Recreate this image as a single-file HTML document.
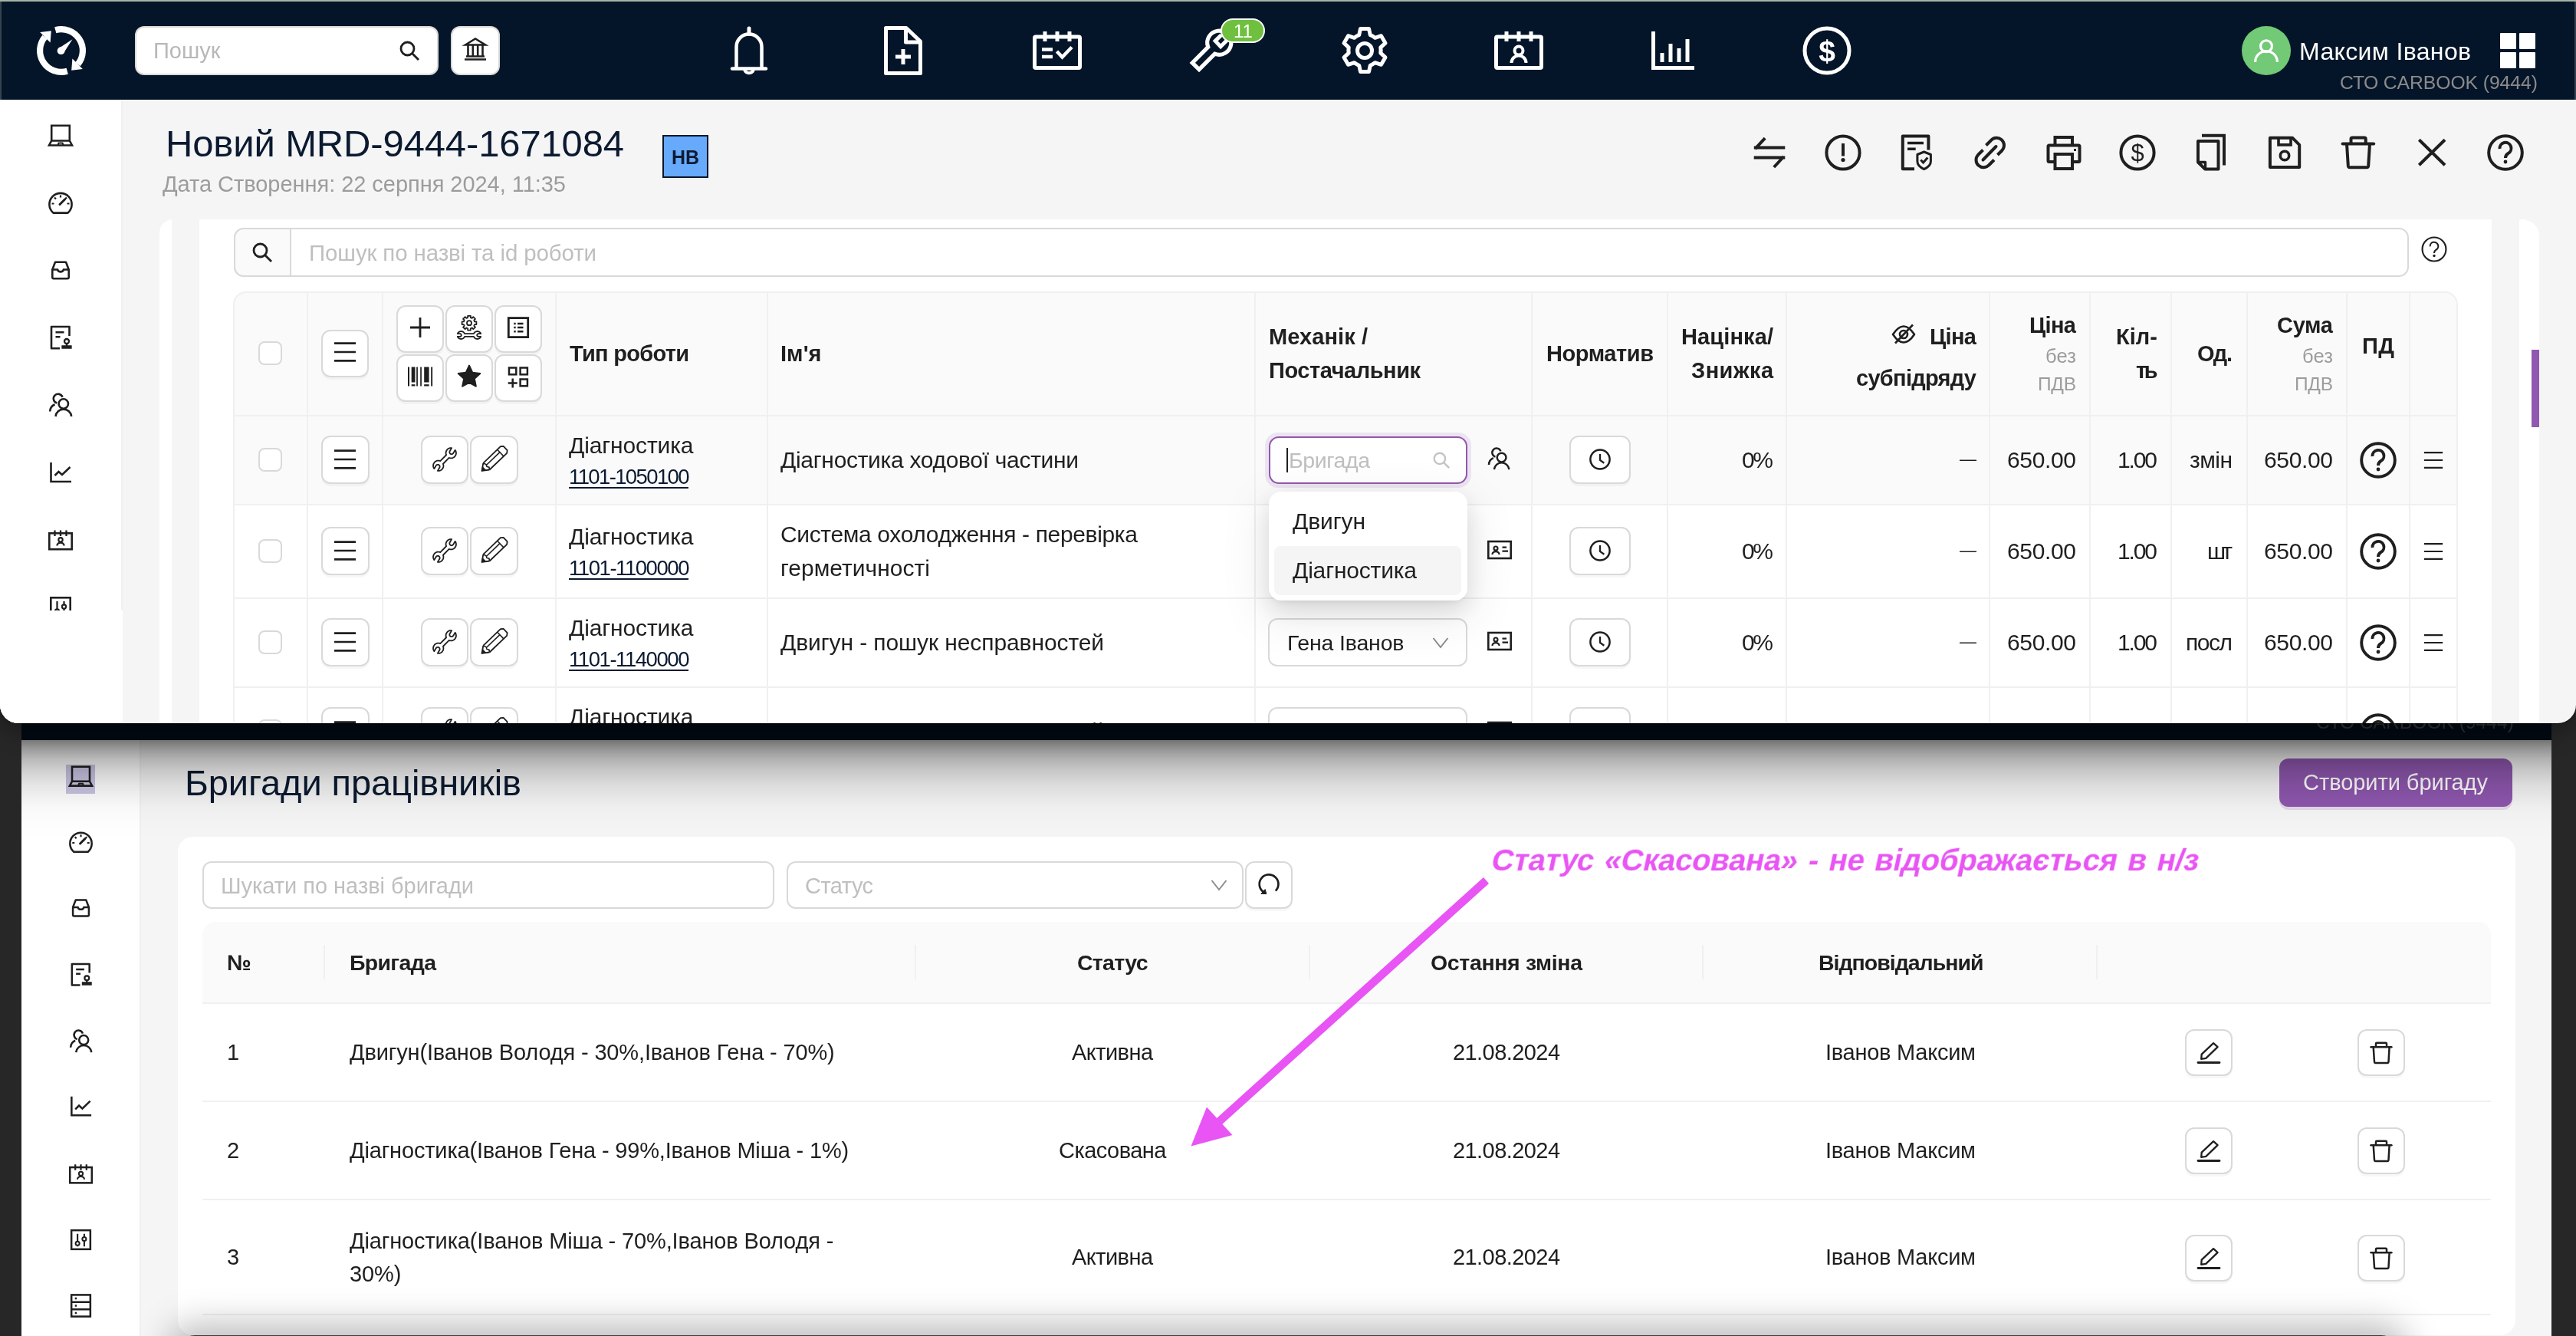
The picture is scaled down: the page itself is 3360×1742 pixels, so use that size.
<!DOCTYPE html>
<html lang="uk"><head><meta charset="utf-8"><title>CARBOOK</title>
<style>
*{box-sizing:border-box}
html,body{margin:0;padding:0}
body{width:3360px;height:1742px;overflow:hidden;background:#272727;position:relative;
 font-family:"Liberation Sans",sans-serif;color:#1f1f1f;-webkit-font-smoothing:antialiased}
.t{position:absolute;white-space:nowrap;display:block;will-change:transform}
.ic{position:absolute;will-change:transform;fill:none;stroke:currentColor;stroke-width:2;overflow:visible}
.abs{position:absolute}
#w1{position:absolute;left:0;top:0;width:3360px;height:943px;background:#f5f5f5;overflow:hidden;
 border-radius:0 0 24px 24px}
#w1sh{position:absolute;left:0;top:0;width:3360px;height:943px;border-radius:0 0 24px 24px;
 box-shadow:0 0 0 1px rgba(0,0,0,.4),0 10px 30px rgba(0,0,0,.35)}
#w2{position:absolute;left:28px;top:900px;width:3300px;height:860px;background:#f5f5f5;overflow:hidden}
.btn{position:absolute;background:#fff;border:2px solid #d9d9d9;border-radius:12px;box-shadow:0 3px 0 rgba(0,0,0,.03)}
.cb{position:absolute;width:31px;height:31px;background:#fff;border:2px solid #d9d9d9;border-radius:8px}
.vl{position:absolute;width:2px;background:#f0f0f0}
.hl{position:absolute;height:2px;background:#f0f0f0}
u{text-decoration:underline;text-decoration-thickness:2px;text-underline-offset:4px}
</style></head><body>
<div id="w2">
<div style="position:absolute;left:0px;top:0px;width:3300px;height:65px;background:#051529;"></div>
<span class="t" style="left:2993.0px;top:24.0px;font-size:24.7px;line-height:35px;color:#6e6e6e;letter-spacing:-0.05px;">СТО CARBOOK (9444)</span>
<div style="position:absolute;left:0px;top:65px;width:155px;height:795px;background:#fff;"></div>
<div style="position:absolute;left:154px;top:65px;width:2px;height:795px;background:#f0f0f0;"></div>
<div style="position:absolute;left:57.5px;top:97px;width:38.5px;height:38px;background:#c9c6e4;"></div>
<svg class="ic" viewBox="0 0 36 36" style="left:60.2px;top:94px;width:35px;height:35px;color:#1f1f1f;"><path d="M6.2 25.5 V5.8 H29.8 V25.5" stroke-width="2.6"/><path d="M6.2 25.5 H29.8 L33 31.5 H3 Z" stroke-width="2.6" stroke-linejoin="miter"/><path d="M14.5 31 L15.5 28.6 H20.5 L21.5 31" stroke-width="2"/></svg>
<svg class="ic" viewBox="0 0 36 36" style="left:60.2px;top:179.5px;width:35px;height:35px;color:#1f1f1f;"><path d="M8.5 31.6 A14.6 14.6 0 1 1 27.5 31.6 Z" stroke-width="2.6" stroke-linejoin="round"/><path d="M18 8.5 V11.5 M10 11.5 L12 13.6 M26 11.5 L24 13.6 M6.5 19.5 H9.5 M26.5 19.5 H29.5" stroke-width="2.2"/><path d="M17 20.5 L23.5 14" stroke-width="3" stroke-linecap="round"/></svg>
<svg class="ic" viewBox="0 0 36 36" style="left:60.2px;top:265.5px;width:35px;height:35px;color:#1f1f1f;"><path d="M7.3 17.5 L11 7.8 H25 L28.7 17.5 V27.5 Q28.7 29.2 27 29.2 H9 Q7.3 29.2 7.3 27.5 Z" stroke-width="2.6" stroke-linejoin="round"/><path d="M7.3 17.5 H14 A4.2 4.2 0 0 0 22 17.5 H28.7" stroke-width="2.6"/></svg>
<svg class="ic" viewBox="0 0 36 36" style="left:60.2px;top:352.5px;width:35px;height:35px;color:#1f1f1f;"><path d="M17 32.3 H6 V4 H29.5 V16" stroke-width="2.6" stroke-linejoin="round"/><path d="M11.5 11.3 H22.5 M11.5 17.2 H17.5" stroke-width="2.6"/><circle cx="26" cy="23" r="3" stroke-width="2.3"/><path d="M26 26 V29.5 M20.5 31.5 H31.5 V29.3 H20.5 Z" stroke-width="2.3"/></svg>
<svg class="ic" viewBox="0 0 36 36" style="left:60.2px;top:439.5px;width:35px;height:35px;color:#1f1f1f;"><circle cx="21.8" cy="16.5" r="6.2" stroke-width="2.6"/><path d="M11.5 33 A10.4 10.4 0 0 1 32.2 33" stroke-width="2.6"/><path d="M13.2 15.5 A6 6 0 1 1 20.5 7.8" stroke-width="2.6"/><path d="M4.2 26.5 A10.5 10.5 0 0 1 10.5 17.2" stroke-width="2.6"/></svg>
<svg class="ic" viewBox="0 0 36 36" style="left:60.2px;top:525px;width:35px;height:35px;color:#1f1f1f;"><path d="M5.5 5 V30 H32" stroke-width="2.6"/><path d="M10.5 22 L15.5 17 L20 21 L30.5 11" stroke-width="2.6"/></svg>
<svg class="ic" viewBox="0 0 36 36" style="left:60.2px;top:612.5px;width:35px;height:35px;color:#1f1f1f;"><rect x="3.3" y="9.3" width="29.4" height="20.9" stroke-width="2.6"/><path d="M10.5 5.5 V13 M18 5.5 V13 M25.5 5.5 V13" stroke-width="2.3"/><circle cx="18" cy="17.8" r="2.7" stroke-width="2.1"/><path d="M13.2 25.5 A4.9 4.9 0 0 1 22.8 25.5" stroke-width="2.1"/></svg>
<svg class="ic" viewBox="0 0 36 36" style="left:60.2px;top:699px;width:35px;height:35px;color:#1f1f1f;"><rect x="5.3" y="5.3" width="25.4" height="25.4" stroke-width="2.6"/><path d="M13.5 10 V20 M13.5 26 V27 M22.5 10 V14 M22.5 20 V27" stroke-width="2.2"/><circle cx="13.5" cy="23" r="2.6" stroke-width="2.1"/><circle cx="22.5" cy="17" r="2.6" stroke-width="2.1"/></svg>
<svg class="ic" viewBox="0 0 36 36" style="left:60.2px;top:785px;width:35px;height:35px;color:#1f1f1f;"><rect x="5.3" y="3.5" width="25.4" height="29" stroke-width="2.6"/><path d="M5.3 13.2 H30.7 M5.3 22.8 H30.7" stroke-width="2.6"/><path d="M10 8.3 H12.5 M10 18 H12.5 M10 27.7 H12.5" stroke-width="2.6"/></svg>
<span class="t" style="left:213.0px;top:88.0px;font-size:47px;line-height:66px;color:#0b1a30;letter-spacing:-0.08px;">Бригади працівників</span>
<div style="position:absolute;left:2945px;top:89px;width:304px;height:63px;background:#8e57ae;border-radius:12px;box-shadow:0 4px 0 rgba(142,87,174,.18);"></div>
<span class="t" style="left:2976.0px;top:99.5px;font-size:29px;line-height:41px;color:#fff;letter-spacing:-0.05px;">Створити бригаду</span>
<div style="position:absolute;left:204px;top:191px;width:3049px;height:650px;background:#fff;border-radius:20px;"></div>
<div style="position:absolute;left:236px;top:223px;width:746px;height:62px;background:#fff;border:2px solid #d9d9d9;border-radius:12px;"></div>
<span class="t" style="left:260.0px;top:234.5px;font-size:29px;line-height:41px;color:#bfbfbf;letter-spacing:-0.02px;">Шукати по назві бригади</span>
<div style="position:absolute;left:998px;top:223px;width:596px;height:62px;background:#fff;border:2px solid #d9d9d9;border-radius:12px;"></div>
<span class="t" style="left:1022.0px;top:234.5px;font-size:29px;line-height:41px;color:#bfbfbf;letter-spacing:-0.53px;">Статус</span>
<svg class="ic" viewBox="0 0 22 22" style="left:1550.5px;top:243px;width:22px;height:22px;color:#8c8c8c;"><path d="M1.5 5 L11 17 L20.5 5" stroke-width="2"/></svg>
<div class="btn" style="position:absolute;left:1596px;top:223px;width:62px;height:62px;"></div>
<svg class="ic" viewBox="0 0 30 30" style="left:1611.5px;top:238px;width:30px;height:30px;color:#1f1f1f;"><path d="M23.8 23.6 A12.4 12.4 0 1 0 7.5 24.6" stroke-width="2.7"/><path d="M4.8 27.3 L10.2 21.6 L11.8 27.6 Z" fill="currentColor" stroke="currentColor" stroke-width="1" stroke-linejoin="round"/></svg>
<div style="position:absolute;left:236px;top:302px;width:2985px;height:106px;background:#fafafa;border-radius:16px 16px 0 0;"></div>
<div style="position:absolute;left:236px;top:407px;width:2985px;height:2px;background:#f0f0f0;"></div>
<div style="position:absolute;left:236px;top:535px;width:2985px;height:2px;background:#f0f0f0;"></div>
<div style="position:absolute;left:236px;top:663px;width:2985px;height:2px;background:#f0f0f0;"></div>
<div style="position:absolute;left:236px;top:813px;width:2985px;height:2px;background:#f0f0f0;"></div>
<div style="position:absolute;left:394px;top:332px;width:2px;height:45px;background:#f0f0f0;"></div>
<div style="position:absolute;left:1165px;top:332px;width:2px;height:45px;background:#f0f0f0;"></div>
<div style="position:absolute;left:1679px;top:332px;width:2px;height:45px;background:#f0f0f0;"></div>
<div style="position:absolute;left:2192px;top:332px;width:2px;height:45px;background:#f0f0f0;"></div>
<div style="position:absolute;left:2706px;top:332px;width:2px;height:45px;background:#f0f0f0;"></div>
<span class="t" style="left:268.0px;top:335.0px;font-size:28.5px;line-height:40px;color:#1f1f1f;font-weight:700;">№</span>
<span class="t" style="left:427.5px;top:335.0px;font-size:28.5px;line-height:40px;color:#1f1f1f;font-weight:700;letter-spacing:-0.68px;">Бригада</span>
<span class="t" style="left:1377.0px;top:335.0px;font-size:28.5px;line-height:40px;color:#1f1f1f;font-weight:700;letter-spacing:-0.71px;">Статус</span>
<span class="t" style="left:1838.0px;top:335.0px;font-size:28.5px;line-height:40px;color:#1f1f1f;font-weight:700;letter-spacing:-0.36px;">Остання зміна</span>
<span class="t" style="left:2343.5px;top:335.0px;font-size:28.5px;line-height:40px;color:#1f1f1f;font-weight:700;letter-spacing:-1.00px;">Відповідальний</span>
<span class="t" style="left:268.0px;top:451.5px;font-size:29px;line-height:41px;color:#1f1f1f;">1</span>
<span class="t" style="left:427.5px;top:451.5px;font-size:29px;line-height:41px;color:#1f1f1f;letter-spacing:-0.15px;">Двигун(Іванов Володя - 30%,Іванов Гена - 70%)</span>
<span class="t" style="left:1370.0px;top:451.5px;font-size:29px;line-height:41px;color:#1f1f1f;letter-spacing:-0.56px;">Активна</span>
<span class="t" style="left:1867.0px;top:451.5px;font-size:29px;line-height:41px;color:#1f1f1f;letter-spacing:-0.57px;">21.08.2024</span>
<span class="t" style="left:2353.0px;top:451.5px;font-size:29px;line-height:41px;color:#1f1f1f;letter-spacing:-0.26px;">Іванов Максим</span>
<div class="btn" style="position:absolute;left:2822px;top:442px;width:62px;height:61px;"></div>
<svg class="ic" viewBox="0 0 30 30" style="left:2837.5px;top:456px;width:30px;height:30px;color:#1f1f1f;"><path d="M1 29.5 H29" stroke-width="2.8" stroke-linecap="round"/><path d="M5.7 18.7 L21.1 4.2 L26.6 9.1 L11.3 23.8 L5.2 24.8 Z" stroke-width="2.3" stroke-linejoin="round"/></svg>
<div class="btn" style="position:absolute;left:3047px;top:442px;width:62px;height:61px;"></div>
<svg class="ic" viewBox="0 0 30 30" style="left:3062.5px;top:456px;width:30px;height:30px;color:#1f1f1f;"><path d="M1.5 9.2 H28.4" stroke-width="2.5" stroke-linecap="round"/><path d="M8 9.2 V5 Q8 3.8 9.2 3.8 H20.8 Q22 3.8 22 5 V9.2" stroke-width="2.5"/><path d="M4.7 9.2 L6 28.5 Q6.1 29.9 7.5 29.9 H23 Q24.4 29.9 24.5 28.5 L25.6 9.2" stroke-width="2.5"/></svg>
<span class="t" style="left:268.0px;top:579.5px;font-size:29px;line-height:41px;color:#1f1f1f;">2</span>
<span class="t" style="left:427.5px;top:579.5px;font-size:29px;line-height:41px;color:#1f1f1f;letter-spacing:-0.17px;">Діагностика(Іванов Гена - 99%,Іванов Міша - 1%)</span>
<span class="t" style="left:1353.0px;top:579.5px;font-size:29px;line-height:41px;color:#1f1f1f;letter-spacing:-0.53px;">Скасована</span>
<span class="t" style="left:1867.0px;top:579.5px;font-size:29px;line-height:41px;color:#1f1f1f;letter-spacing:-0.57px;">21.08.2024</span>
<span class="t" style="left:2353.0px;top:579.5px;font-size:29px;line-height:41px;color:#1f1f1f;letter-spacing:-0.26px;">Іванов Максим</span>
<div class="btn" style="position:absolute;left:2822px;top:570px;width:62px;height:61px;"></div>
<svg class="ic" viewBox="0 0 30 30" style="left:2837.5px;top:584px;width:30px;height:30px;color:#1f1f1f;"><path d="M1 29.5 H29" stroke-width="2.8" stroke-linecap="round"/><path d="M5.7 18.7 L21.1 4.2 L26.6 9.1 L11.3 23.8 L5.2 24.8 Z" stroke-width="2.3" stroke-linejoin="round"/></svg>
<div class="btn" style="position:absolute;left:3047px;top:570px;width:62px;height:61px;"></div>
<svg class="ic" viewBox="0 0 30 30" style="left:3062.5px;top:584px;width:30px;height:30px;color:#1f1f1f;"><path d="M1.5 9.2 H28.4" stroke-width="2.5" stroke-linecap="round"/><path d="M8 9.2 V5 Q8 3.8 9.2 3.8 H20.8 Q22 3.8 22 5 V9.2" stroke-width="2.5"/><path d="M4.7 9.2 L6 28.5 Q6.1 29.9 7.5 29.9 H23 Q24.4 29.9 24.5 28.5 L25.6 9.2" stroke-width="2.5"/></svg>
<span class="t" style="left:268.0px;top:719.0px;font-size:29px;line-height:41px;color:#1f1f1f;">3</span>
<span class="t" style="left:427.5px;top:698.0px;font-size:29px;line-height:41px;color:#1f1f1f;letter-spacing:-0.14px;">Діагностика(Іванов Міша - 70%,Іванов Володя -</span>
<span class="t" style="left:427.5px;top:740.5px;font-size:29px;line-height:41px;color:#1f1f1f;letter-spacing:-0.07px;">30%)</span>
<span class="t" style="left:1370.0px;top:719.0px;font-size:29px;line-height:41px;color:#1f1f1f;letter-spacing:-0.56px;">Активна</span>
<span class="t" style="left:1867.0px;top:719.0px;font-size:29px;line-height:41px;color:#1f1f1f;letter-spacing:-0.57px;">21.08.2024</span>
<span class="t" style="left:2353.0px;top:719.0px;font-size:29px;line-height:41px;color:#1f1f1f;letter-spacing:-0.26px;">Іванов Максим</span>
<div class="btn" style="position:absolute;left:2822px;top:709.5px;width:62px;height:61px;"></div>
<svg class="ic" viewBox="0 0 30 30" style="left:2837.5px;top:723.5px;width:30px;height:30px;color:#1f1f1f;"><path d="M1 29.5 H29" stroke-width="2.8" stroke-linecap="round"/><path d="M5.7 18.7 L21.1 4.2 L26.6 9.1 L11.3 23.8 L5.2 24.8 Z" stroke-width="2.3" stroke-linejoin="round"/></svg>
<div class="btn" style="position:absolute;left:3047px;top:709.5px;width:62px;height:61px;"></div>
<svg class="ic" viewBox="0 0 30 30" style="left:3062.5px;top:723.5px;width:30px;height:30px;color:#1f1f1f;"><path d="M1.5 9.2 H28.4" stroke-width="2.5" stroke-linecap="round"/><path d="M8 9.2 V5 Q8 3.8 9.2 3.8 H20.8 Q22 3.8 22 5 V9.2" stroke-width="2.5"/><path d="M4.7 9.2 L6 28.5 Q6.1 29.9 7.5 29.9 H23 Q24.4 29.9 24.5 28.5 L25.6 9.2" stroke-width="2.5"/></svg>
<div style="position:absolute;left:0px;top:43px;width:3300px;height:152px;background:linear-gradient(to bottom,rgba(0,0,0,0.56) 0px,rgba(0,0,0,0.56) 22px,rgba(0,0,0,0.5) 22px,rgba(0,0,0,0.4) 32px,rgba(0,0,0,0.26) 49px,rgba(0,0,0,0.17) 65px,rgba(0,0,0,0.1) 80px,rgba(0,0,0,0.055) 97px,rgba(0,0,0,0.025) 111px,rgba(0,0,0,0.008) 132px,rgba(0,0,0,0) 152px);pointer-events:none;"></div>
</div>
<div id="w1sh"></div>
<div id="w1">
<div style="position:absolute;left:0px;top:0px;width:3360px;height:130px;background:#051529;"></div>
<div style="position:absolute;left:0px;top:2px;width:2px;height:128px;background:#37424f;"></div>
<div style="position:absolute;left:3358px;top:2px;width:2px;height:128px;background:#37424f;"></div>
<div style="position:absolute;left:0px;top:0px;width:3360px;height:2px;background:#a4b6a3;"></div>
<svg class="ic" viewBox="0 0 64 64" style="left:48.2px;top:33.8px;width:64px;height:64px;color:#fff;"><path d="M24.27 5.19 A27.9 27.9 0 0 1 53.53 49.75" stroke-width="8.2"/><path d="M39.73 58.81 A27.9 27.9 0 0 1 10.47 14.25" stroke-width="8.2"/><path d="M4.2 7.9 L18.8 6.2 L17.6 21.4 L13.5 17.5 Z" fill="currentColor" stroke="none"/><path d="M59.8 56.1 L45.2 57.8 L46.4 42.6 L50.5 46.5 Z" fill="currentColor" stroke="none"/><circle cx="31.6" cy="32.2" r="4.9" fill="currentColor" stroke="none"/><path d="M28.6 29 L46.5 17.2 L34.9 35.2 Z" fill="currentColor" stroke="none"/></svg>
<div style="position:absolute;left:176px;top:34px;width:396px;height:64px;background:#fff;border:2px solid #d9d9d9;border-radius:12px;"></div>
<span class="t" style="left:199.5px;top:45.5px;font-size:29px;line-height:41px;color:#b8b8b8;letter-spacing:0.02px;">Пошук</span>
<svg class="ic" viewBox="0 0 26 26" style="left:521px;top:53px;width:26px;height:26px;color:#1f1f1f;"><circle cx="10.5" cy="10.5" r="8.5" stroke-width="2.8"/><path d="M16.5 16.5 L25 25" stroke-width="2.8"/></svg>
<div style="position:absolute;left:588px;top:34px;width:64px;height:64px;background:#fff;border:2px solid #d9d9d9;border-radius:12px;"></div>
<svg class="ic" viewBox="0 0 30 30" style="left:605px;top:49px;width:30px;height:30px;color:#1f1f1f;"><path d="M2 9.5 L15 1.5 L28 9.5 Z" stroke-width="2.6" stroke-linejoin="miter"/><path d="M5.5 10 V25 M11.8 10 V25 M18.2 10 V25 M24.5 10 V25" stroke-width="2.6"/><path d="M3 24.5 H27 M1 28.5 H29" stroke-width="2.6"/></svg>
<svg class="ic" viewBox="0 0 48 64" style="left:953px;top:34px;width:48px;height:64px;color:#fff;"><path d="M2 55.5 H46" stroke-width="4.5" stroke-linecap="round"/><path d="M7.5 55.5 V27 A16.5 16.5 0 0 1 40.5 27 V55.5" stroke-width="4.5"/><path d="M18 56.5 A6.2 6.2 0 0 0 30 56.5" stroke-width="4"/><path d="M24 3 V10" stroke-width="5" stroke-linecap="round"/></svg>
<svg class="ic" viewBox="0 0 50 64" style="left:1153px;top:34px;width:50px;height:64px;color:#fff;"><path d="M29 2.5 H2.5 V61.5 H47.5 V20 Z" stroke-width="5" stroke-linejoin="round"/><path d="M28.5 3 V21 H47" stroke-width="5" stroke-linejoin="round"/><path d="M25 30 V50 M15 40 H35" stroke-width="5"/></svg>
<svg class="ic" viewBox="0 0 64 50" style="left:1347px;top:41px;width:64px;height:50px;color:#fff;"><rect x="2.5" y="7" width="59" height="40.5" rx="1.5" stroke-width="5"/><path d="M16 0 V13 M32 0 V13 M48 0 V13" stroke-width="5"/><path d="M12 23.5 H26 M12 33 H26" stroke-width="4.5"/><path d="M31.5 26 L38.5 33.5 L51 20.5" stroke-width="4.5"/></svg>
<svg class="ic" viewBox="0 0 58 58" style="left:1551px;top:37px;width:58px;height:58px;color:#fff;"><path d="M33.53 33.19 L13.06 53.66 L4.24 44.9 L24.76 24.38 A15.6 15.6 0 1 1 33.53 33.19 Z" stroke-width="5.2" stroke-linejoin="miter"/><path d="M42.1 8.4 L34.14 16.4 L41.1 23.76 L49.1 15.76" stroke-width="5" stroke-linejoin="miter"/></svg>
<div style="position:absolute;left:1592px;top:24px;width:58px;height:32px;background:#70c040;border-radius:16px;border:2px solid #fff;"></div>
<span class="t" style="left:1608.5px;top:24.0px;font-size:24px;line-height:34px;color:#fff;">11</span>
<svg class="ic" viewBox="0 0 64 64" style="left:1748px;top:34px;width:64px;height:64px;color:#fff;"><circle cx="32" cy="32" r="9.5" stroke-width="5"/><path stroke-width="5" stroke-linejoin="round" d="M26.5 3.5 h11 l1.8 8.2 a21.5 21.5 0 0 1 6.2 3.6 l8 -2.6 l5.5 9.5 l-6.2 5.7 a21.5 21.5 0 0 1 0 7.2 l6.2 5.7 l-5.5 9.5 l-8 -2.6 a21.5 21.5 0 0 1 -6.2 3.6 l-1.8 8.2 h-11 l-1.8 -8.2 a21.5 21.5 0 0 1 -6.2 -3.6 l-8 2.6 l-5.5 -9.5 l6.2 -5.7 a21.5 21.5 0 0 1 0 -7.2 l-6.2 -5.7 l5.5 -9.5 l8 2.6 a21.5 21.5 0 0 1 6.2 -3.6 z"/></svg>
<svg class="ic" viewBox="0 0 64 50" style="left:1949px;top:41px;width:64px;height:50px;color:#fff;"><rect x="2.5" y="7" width="59" height="40.5" rx="1.5" stroke-width="5"/><path d="M16 0 V13 M32 0 V13 M48 0 V13" stroke-width="5"/><circle cx="32" cy="25" r="5.5" stroke-width="4"/><path d="M22.5 41 A9.5 9.5 0 0 1 41.5 41" stroke-width="4"/></svg>
<svg class="ic" viewBox="0 0 56 50" style="left:2154px;top:41px;width:56px;height:50px;color:#fff;"><path d="M2.5 0 V47.5 H56" stroke-width="5"/><path d="M14 28 V40 M25 16 V40 M36 22 V40 M47 10 V40" stroke-width="5"/></svg>
<svg class="ic" viewBox="0 0 64 64" style="left:2351px;top:34px;width:64px;height:64px;color:#fff;"><circle cx="32" cy="32" r="29" stroke-width="5"/><text x="32" y="46" text-anchor="middle" font-family="Liberation Sans, sans-serif" font-size="39" font-weight="700" fill="currentColor" stroke="none">$</text></svg>
<div style="position:absolute;left:2924px;top:34px;width:64px;height:64px;background:#72c976;border-radius:50%;"></div>
<svg class="ic" viewBox="0 0 32 32" style="left:2939px;top:49px;width:34px;height:34px;color:#fff;"><circle cx="16" cy="10.5" r="7" stroke-width="3"/><path d="M2.5 30 A13.5 13.5 0 0 1 29.5 30" stroke-width="3"/></svg>
<span class="t" style="left:2999.0px;top:44.8px;font-size:32px;line-height:45px;color:#fff;letter-spacing:0.36px;">Максим Іванов</span>
<div style="position:absolute;left:3261px;top:43px;width:21px;height:21px;background:#fff;border-radius:1px;"></div>
<div style="position:absolute;left:3286px;top:43px;width:21px;height:21px;background:#fff;border-radius:1px;"></div>
<div style="position:absolute;left:3261px;top:68px;width:21px;height:21px;background:#fff;border-radius:1px;"></div>
<div style="position:absolute;left:3286px;top:68px;width:21px;height:21px;background:#fff;border-radius:1px;"></div>
<span class="t" style="left:3052.0px;top:89.5px;font-size:24.7px;line-height:35px;color:#8b8b8b;letter-spacing:-0.05px;">СТО CARBOOK (9444)</span>
<div style="position:absolute;left:0px;top:130px;width:159px;height:813px;background:#fff;"></div>
<div style="position:absolute;left:158px;top:130px;width:2px;height:666px;background:#f0f0f0;"></div>
<svg class="ic" viewBox="0 0 36 36" style="left:61px;top:158px;width:36px;height:36px;color:#1f1f1f;"><path d="M6.2 25.5 V5.8 H29.8 V25.5" stroke-width="2.6"/><path d="M6.2 25.5 H29.8 L33 31.5 H3 Z" stroke-width="2.6" stroke-linejoin="miter"/><path d="M14.5 31 L15.5 28.6 H20.5 L21.5 31" stroke-width="2"/></svg>
<svg class="ic" viewBox="0 0 36 36" style="left:61px;top:246px;width:36px;height:36px;color:#1f1f1f;"><path d="M8.5 31.6 A14.6 14.6 0 1 1 27.5 31.6 Z" stroke-width="2.6" stroke-linejoin="round"/><path d="M18 8.5 V11.5 M10 11.5 L12 13.6 M26 11.5 L24 13.6 M6.5 19.5 H9.5 M26.5 19.5 H29.5" stroke-width="2.2"/><path d="M17 20.5 L23.5 14" stroke-width="3" stroke-linecap="round"/></svg>
<svg class="ic" viewBox="0 0 36 36" style="left:61px;top:334px;width:36px;height:36px;color:#1f1f1f;"><path d="M7.3 17.5 L11 7.8 H25 L28.7 17.5 V27.5 Q28.7 29.2 27 29.2 H9 Q7.3 29.2 7.3 27.5 Z" stroke-width="2.6" stroke-linejoin="round"/><path d="M7.3 17.5 H14 A4.2 4.2 0 0 0 22 17.5 H28.7" stroke-width="2.6"/></svg>
<svg class="ic" viewBox="0 0 36 36" style="left:61px;top:422px;width:36px;height:36px;color:#1f1f1f;"><path d="M17 32.3 H6 V4 H29.5 V16" stroke-width="2.6" stroke-linejoin="round"/><path d="M11.5 11.3 H22.5 M11.5 17.2 H17.5" stroke-width="2.6"/><circle cx="26" cy="23" r="3" stroke-width="2.3"/><path d="M26 26 V29.5 M20.5 31.5 H31.5 V29.3 H20.5 Z" stroke-width="2.3"/></svg>
<svg class="ic" viewBox="0 0 36 36" style="left:61px;top:510px;width:36px;height:36px;color:#1f1f1f;"><circle cx="21.8" cy="16.5" r="6.2" stroke-width="2.6"/><path d="M11.5 33 A10.4 10.4 0 0 1 32.2 33" stroke-width="2.6"/><path d="M13.2 15.5 A6 6 0 1 1 20.5 7.8" stroke-width="2.6"/><path d="M4.2 26.5 A10.5 10.5 0 0 1 10.5 17.2" stroke-width="2.6"/></svg>
<svg class="ic" viewBox="0 0 36 36" style="left:61px;top:598px;width:36px;height:36px;color:#1f1f1f;"><path d="M5.5 5 V30 H32" stroke-width="2.6"/><path d="M10.5 22 L15.5 17 L20 21 L30.5 11" stroke-width="2.6"/></svg>
<svg class="ic" viewBox="0 0 36 36" style="left:61px;top:686px;width:36px;height:36px;color:#1f1f1f;"><rect x="3.3" y="9.3" width="29.4" height="20.9" stroke-width="2.6"/><path d="M10.5 5.5 V13 M18 5.5 V13 M25.5 5.5 V13" stroke-width="2.3"/><circle cx="18" cy="17.8" r="2.7" stroke-width="2.1"/><path d="M13.2 25.5 A4.9 4.9 0 0 1 22.8 25.5" stroke-width="2.1"/></svg>
<svg class="ic" viewBox="0 0 36 36" style="left:61px;top:773.5px;width:36px;height:36px;color:#1f1f1f;"><rect x="5.3" y="5.3" width="25.4" height="25.4" stroke-width="2.6"/><path d="M13.5 10 V20 M13.5 26 V27 M22.5 10 V14 M22.5 20 V27" stroke-width="2.2"/><circle cx="13.5" cy="23" r="2.6" stroke-width="2.1"/><circle cx="22.5" cy="17" r="2.6" stroke-width="2.1"/></svg>
<div style="position:absolute;left:0px;top:796px;width:160px;height:147px;background:#fff;"></div>
<span class="t" style="left:216.0px;top:152.5px;font-size:49px;line-height:69px;color:#0b1a30;letter-spacing:-0.14px;">Новий MRD-9444-1671084</span>
<span class="t" style="left:212.0px;top:220.0px;font-size:29px;line-height:41px;color:#9c9c9c;letter-spacing:-0.04px;">Дата Створення: 22 серпня 2024, 11:35</span>
<div style="position:absolute;left:864px;top:176px;width:60px;height:56px;background:#67a9fb;border:2px solid #0a1628;"></div>
<span class="t" style="left:876.4px;top:187.5px;font-size:25px;line-height:35px;color:#0d1b33;font-weight:700;">НВ</span>
<svg class="ic" viewBox="0 0 48 48" style="left:2284px;top:175px;width:48px;height:48px;color:#1f1f1f;"><path d="M44.3 17.6 H3.8 M5.2 19.2 L18.2 5.2" stroke-width="4"/><path d="M3.7 30.6 H44.3 M42.8 29 L29.8 43" stroke-width="4"/></svg>
<svg class="ic" viewBox="0 0 48 48" style="left:2380px;top:175px;width:48px;height:48px;color:#1f1f1f;"><circle cx="24" cy="24" r="21.6" stroke-width="4"/><path d="M24 12 V28.5" stroke-width="4"/><circle cx="24" cy="33.5" r="2.6" fill="currentColor" stroke="none"/></svg>
<svg class="ic" viewBox="0 0 48 48" style="left:2476px;top:175px;width:48px;height:48px;color:#1f1f1f;"><path d="M21 45.2 H5.8 V2.6 H39.4 V20.5" stroke-width="4" stroke-linejoin="round"/><path d="M12 11.5 H33 M12 19.3 H22.7" stroke-width="3.4"/><path d="M33.6 23 L42.4 26.5 V35.5 Q42.4 41.5 33.6 45.6 Q24.9 41.5 24.9 35.5 V26.5 Z" stroke-width="3" stroke-linejoin="round"/><path d="M29.3 33.5 L32.6 37 L38.3 30.5" stroke-width="3"/></svg>
<svg class="ic" viewBox="0 0 48 48" style="left:2572px;top:175px;width:48px;height:48px;color:#1f1f1f;"><path d="M14.5 33.5 L31.5 16" stroke-width="4" stroke-linecap="round"/><path d="M18.5 14.5 L25 8 A9.5 9.5 0 0 1 39.5 21 L33.5 27" stroke-width="4" stroke-linecap="butt"/><path d="M29 33.5 L22.5 40 A9.5 9.5 0 0 1 8 27 L14.5 20.5" stroke-width="4" stroke-linecap="butt"/></svg>
<svg class="ic" viewBox="0 0 48 48" style="left:2668px;top:175px;width:48px;height:48px;color:#1f1f1f;"><path d="M12.5 14 V4 H35 V14" stroke-width="4"/><path d="M12.5 36 H5 Q3.5 36 3.5 34.5 V16 Q3.5 14.5 5 14.5 H43 Q44.5 14.5 44.5 16 V34.5 Q44.5 36 43 36 H35.5" stroke-width="4"/><rect x="12.5" y="26" width="22.5" height="19" stroke-width="4"/><rect x="37" y="19" width="3" height="3" fill="currentColor" stroke="none"/></svg>
<svg class="ic" viewBox="0 0 48 48" style="left:2764px;top:175px;width:48px;height:48px;color:#1f1f1f;"><circle cx="24" cy="24" r="21.6" stroke-width="4"/><text x="24" y="35" text-anchor="middle" font-family="Liberation Sans, sans-serif" font-size="31" fill="currentColor" stroke="none">$</text></svg>
<svg class="ic" viewBox="0 0 48 48" style="left:2860px;top:175px;width:48px;height:48px;color:#1f1f1f;"><path d="M16 45.4 H33.5 V9 H7 V36.5 Z" stroke-width="4" stroke-linejoin="round"/><path d="M7.5 36.5 H16.5 V45" stroke-width="3.4" stroke-linejoin="round"/><path d="M12 1.8 H41 V40.5" stroke-width="4"/></svg>
<svg class="ic" viewBox="0 0 48 48" style="left:2956px;top:175px;width:48px;height:48px;color:#1f1f1f;"><path d="M4.9 4.7 H34 L43.2 13.9 V43 H4.9 Z" stroke-width="4" stroke-linejoin="round"/><path d="M16 5 V13.9 H32 V5" stroke-width="3.6"/><circle cx="24" cy="27.9" r="5.7" stroke-width="3.6"/></svg>
<svg class="ic" viewBox="0 0 48 48" style="left:3052px;top:175px;width:48px;height:48px;color:#1f1f1f;"><path d="M3.6 12.4 H44.2" stroke-width="4" stroke-linecap="round"/><path d="M14.5 12.4 V6.2 Q14.5 4.5 16.2 4.5 H32 Q33.7 4.5 33.7 6.2 V12.4" stroke-width="4"/><path d="M9 12.4 L10.8 41 Q11 43.2 13 43.2 H35 Q37 43.2 37.2 41 L39 12.4" stroke-width="4"/></svg>
<svg class="ic" viewBox="0 0 48 48" style="left:3148px;top:175px;width:48px;height:48px;color:#1f1f1f;"><path d="M7.3 7.3 L41 40.2 M41 7.3 L7.3 40.2" stroke-width="4"/></svg>
<svg class="ic" viewBox="0 0 48 48" style="left:3244px;top:175px;width:48px;height:48px;color:#1f1f1f;stroke-width:4;"><circle cx="24" cy="24" r="21.8"/><path d="M16.5 19 A7.5 7.5 0 1 1 27.5 25 Q24 27.2 24 31"/><circle cx="24" cy="36" r="2.4" fill="currentColor" stroke="none"/></svg>
<div style="position:absolute;left:208px;top:286px;width:32px;height:657px;background:#fff;border-radius:18px 0 0 0;"></div>
<div style="position:absolute;left:224px;top:286px;width:36px;height:657px;background:#f5f5f5;"></div>
<div style="position:absolute;left:260px;top:286px;width:2990px;height:657px;background:#fff;"></div>
<div style="position:absolute;left:3270px;top:286px;width:42px;height:657px;background:#fff;border-radius:0 22px 0 0;"></div>
<div style="position:absolute;left:3250px;top:286px;width:36px;height:657px;background:#f5f5f5;"></div>
<div style="position:absolute;left:3302px;top:456px;width:10px;height:101px;background:#9058b0;"></div>
<div style="position:absolute;left:305px;top:297px;width:2837px;height:64px;background:#fff;border:2px solid #d9d9d9;border-radius:13px;"></div>
<div style="position:absolute;left:305px;top:297px;width:75px;height:64px;background:#fafafa;border:2px solid #d9d9d9;border-radius:13px 0 0 13px;"></div>
<svg class="ic" viewBox="0 0 26 26" style="left:329px;top:315.5px;width:26px;height:26px;color:#1f1f1f;"><circle cx="10.5" cy="10.5" r="8.5" stroke-width="2.8"/><path d="M16.5 16.5 L25 25" stroke-width="2.8"/></svg>
<span class="t" style="left:403.0px;top:308.5px;font-size:29.5px;line-height:41px;color:#bfbfbf;letter-spacing:-0.13px;">Пошук по назві та id роботи</span>
<svg class="ic" viewBox="0 0 48 48" style="left:3157.5px;top:308px;width:34px;height:34px;color:#1f1f1f;stroke-width:3;"><circle cx="24" cy="24" r="21.8"/><path d="M16.5 19 A7.5 7.5 0 1 1 27.5 25 Q24 27.2 24 31"/><circle cx="24" cy="36" r="2.4" fill="currentColor" stroke="none"/></svg>
<div style="position:absolute;left:305px;top:380px;width:2900px;height:162px;background:#fafafa;border-radius:16px 16px 0 0;"></div>
<div style="position:absolute;left:305px;top:542px;width:2900px;height:116px;background:#fafafa;"></div>
<div style="position:absolute;left:304px;top:380px;width:2902px;height:632px;border:2px solid #f0f0f0;border-bottom:none;border-radius:17px 17px 0 0;"></div>
<div class="hl" style="left:305px;top:541px;width:2900px"></div>
<div class="hl" style="left:305px;top:657px;width:2900px"></div>
<div class="hl" style="left:305px;top:779px;width:2900px"></div>
<div class="hl" style="left:305px;top:895px;width:2900px"></div>
<div class="hl" style="left:305px;top:1011px;width:2900px"></div>
<div class="vl" style="left:400px;top:380px;height:640px"></div>
<div class="vl" style="left:498px;top:380px;height:640px"></div>
<div class="vl" style="left:724px;top:380px;height:640px"></div>
<div class="vl" style="left:1000px;top:380px;height:640px"></div>
<div class="vl" style="left:1636px;top:380px;height:640px"></div>
<div class="vl" style="left:1997px;top:380px;height:640px"></div>
<div class="vl" style="left:2174px;top:380px;height:640px"></div>
<div class="vl" style="left:2329px;top:380px;height:640px"></div>
<div class="vl" style="left:2594px;top:380px;height:640px"></div>
<div class="vl" style="left:2725px;top:380px;height:640px"></div>
<div class="vl" style="left:2831px;top:380px;height:640px"></div>
<div class="vl" style="left:2930px;top:380px;height:640px"></div>
<div class="vl" style="left:3060px;top:380px;height:640px"></div>
<div class="vl" style="left:3142px;top:380px;height:640px"></div>
<div class="cb" style="left:337px;top:445px"></div>
<div class="btn" style="left:419px;top:430px;width:62px;height:62px"></div>
<svg class="ic" viewBox="0 0 30 30" style="left:435px;top:444px;width:30px;height:30px;color:#1f1f1f;stroke-width:2.7;"><path d="M1 3.7 H29 M1 15 H29 M1 26.3 H29"/></svg>
<div class="btn" style="left:517px;top:398px;width:62px;height:62px"></div>
<svg class="ic" viewBox="0 0 34 34" style="left:531px;top:410px;width:34px;height:34px;color:#1f1f1f;"><path d="M17 4 V30 M4 17 H30" stroke-width="2.8"/></svg>
<div class="btn" style="left:581px;top:398px;width:62px;height:62px"></div>
<svg class="ic" viewBox="0 0 34 34" style="left:595px;top:410.7px;width:34px;height:34px;color:#1f1f1f;"><path d="M15.13 0.78 L18.87 0.78 L18.84 3.14 L20.69 3.90 L22.33 2.22 L24.98 4.87 L23.30 6.51 L24.06 8.36 L26.42 8.33 L26.42 12.07 L24.06 12.04 L23.30 13.89 L24.98 15.53 L22.33 18.18 L20.69 16.50 L18.84 17.26 L18.87 19.62 L15.13 19.62 L15.16 17.26 L13.31 16.50 L11.67 18.18 L9.02 15.53 L10.70 13.89 L9.94 12.04 L7.58 12.07 L7.58 8.33 L9.94 8.36 L10.70 6.51 L9.02 4.87 L11.67 2.22 L13.31 3.90 L15.16 3.14 Z" stroke-width="1.8" stroke-linejoin="round"/><circle cx="17" cy="10.2" r="3" stroke-width="1.8"/><path d="M22.98 24.10 L23.36 23.35 L23.86 22.68 L24.48 22.10 L25.18 21.63 L25.94 21.28 L26.76 21.07 L27.60 21.00 L28.44 21.07 L29.26 21.28 L30.02 21.63 L30.72 22.10 L31.34 22.68 L31.84 23.35 L32.22 24.10 L29.12 24.10 L28.40 24.24 L27.78 24.66 L27.37 25.27 L27.22 26.00 L27.37 26.73 L27.78 27.34 L28.40 27.76 L29.12 27.90 L32.22 27.90 L31.84 28.65 L31.34 29.32 L30.72 29.90 L30.02 30.37 L29.26 30.72 L28.44 30.93 L27.60 31.00 L26.76 30.93 L25.94 30.72 L25.18 30.37 L24.48 29.90 L23.86 29.32 L23.36 28.65 L22.98 27.90 L11.02 27.90 L10.64 28.65 L10.14 29.32 L9.52 29.90 L8.82 30.37 L8.06 30.72 L7.24 30.93 L6.40 31.00 L5.56 30.93 L4.74 30.72 L3.98 30.37 L3.28 29.90 L2.66 29.32 L2.16 28.65 L1.78 27.90 L4.88 27.90 L5.60 27.76 L6.22 27.34 L6.63 26.73 L6.78 26.00 L6.63 25.27 L6.22 24.66 L5.60 24.24 L4.88 24.10 L1.78 24.10 L2.16 23.35 L2.66 22.68 L3.28 22.10 L3.98 21.63 L4.74 21.28 L5.56 21.07 L6.40 21.00 L7.24 21.07 L8.06 21.28 L8.82 21.63 L9.52 22.10 L10.14 22.68 L10.64 23.35 L11.02 24.10 Z" stroke-width="1.8" stroke-linejoin="round"/></svg>
<div class="btn" style="left:645px;top:398px;width:62px;height:62px"></div>
<svg class="ic" viewBox="0 0 34 34" style="left:659px;top:410px;width:34px;height:34px;color:#1f1f1f;"><rect x="4.3" y="4.6" width="25.4" height="25" stroke-width="2.8"/><path d="M16 12 H23.5 M16 17 H23.5 M16 22.3 H23.5" stroke-width="2.4"/><path d="M11.3 12 H13.7 M11.3 17 H13.7 M11.3 22.3 H13.7" stroke-width="2.4"/></svg>
<div class="btn" style="left:517px;top:462px;width:62px;height:62px"></div>
<svg class="ic" viewBox="0 0 34 34" style="left:531px;top:474px;width:34px;height:34px;color:#1f1f1f;"><g fill="currentColor" stroke="none"><rect x="1" y="4.5" width="2" height="25"/><rect x="5.7" y="4.5" width="4.8" height="20"/><rect x="12.2" y="4.5" width="1.7" height="25"/><rect x="17.2" y="4.5" width="1.7" height="25"/><rect x="22.2" y="4.5" width="6.4" height="20"/><rect x="31.2" y="4.5" width="1.9" height="25"/><rect x="5.7" y="27.2" width="4.8" height="2.3"/><rect x="22.2" y="27.2" width="6.4" height="2.3"/></g></svg>
<div class="btn" style="left:581px;top:462px;width:62px;height:62px"></div>
<svg class="ic" viewBox="0 0 34 34" style="left:595px;top:472.5px;width:34px;height:34px;color:#1f1f1f;"><path d="M17.00 3.60 L21.23 12.78 L31.27 13.96 L23.85 20.82 L25.82 30.74 L17.00 25.80 L8.18 30.74 L10.15 20.82 L2.73 13.96 L12.77 12.78 Z" fill="currentColor" stroke="currentColor" stroke-width="2" stroke-linejoin="round"/></svg>
<div class="btn" style="left:645px;top:462px;width:62px;height:62px"></div>
<svg class="ic" viewBox="0 0 34 34" style="left:659px;top:473.5px;width:34px;height:34px;color:#1f1f1f;"><rect x="5" y="5.5" width="9.3" height="8.8" stroke-width="2.5"/><rect x="19.6" y="5.5" width="9.3" height="8.8" stroke-width="2.5"/><rect x="19.6" y="20.5" width="9.3" height="8.8" stroke-width="2.5"/><path d="M9.7 19.5 V31.5 M3.7 25.5 H15.7" stroke-width="2.5"/></svg>
<span class="t" style="left:743.0px;top:440.5px;font-size:29px;line-height:41px;color:#1f1f1f;font-weight:700;letter-spacing:-0.71px;">Тип роботи</span>
<span class="t" style="left:1018.0px;top:440.5px;font-size:29px;line-height:41px;color:#1f1f1f;font-weight:700;letter-spacing:0.06px;">Ім'я</span>
<span class="t" style="left:1655.0px;top:418.5px;font-size:29px;line-height:41px;color:#1f1f1f;font-weight:700;letter-spacing:0.08px;">Механік /</span>
<span class="t" style="left:1655.0px;top:462.5px;font-size:29px;line-height:41px;color:#1f1f1f;font-weight:700;letter-spacing:-0.45px;">Постачальник</span>
<span class="t" style="left:2017.0px;top:440.5px;font-size:29px;line-height:41px;color:#1f1f1f;font-weight:700;letter-spacing:-0.44px;">Норматив</span>
<span class="t" style="left:2193.0px;top:418.5px;font-size:29px;line-height:41px;color:#1f1f1f;font-weight:700;letter-spacing:0.12px;">Націнка/</span>
<span class="t" style="left:2206.0px;top:462.5px;font-size:29px;line-height:41px;color:#1f1f1f;font-weight:700;letter-spacing:0.46px;">Знижка</span>
<svg class="ic" viewBox="0 0 32 32" style="left:2466.5px;top:420px;width:32px;height:32px;color:#1f1f1f;"><path d="M2 16 Q9 5.5 16 5.5 Q23 5.5 30 16 Q23 26.5 16 26.5 Q9 26.5 2 16 Z" stroke-width="2.6" stroke-linejoin="round"/><circle cx="16" cy="16" r="5" stroke-width="2.6"/><path d="M5 27.5 L28 3.5" stroke-width="2.6"/></svg>
<span class="t" style="left:2517.0px;top:418.5px;font-size:29px;line-height:41px;color:#1f1f1f;font-weight:700;letter-spacing:-0.63px;">Ціна</span>
<span class="t" style="left:2421.0px;top:472.5px;font-size:29px;line-height:41px;color:#1f1f1f;font-weight:700;letter-spacing:-0.70px;">субпідряду</span>
<span class="t" style="left:2647.0px;top:403.5px;font-size:29px;line-height:41px;color:#1f1f1f;font-weight:700;letter-spacing:-0.63px;">Ціна</span>
<span class="t" style="left:2668.0px;top:446.0px;font-size:25.5px;line-height:36px;color:#9c9c9c;letter-spacing:0.18px;">без</span>
<span class="t" style="left:2658.0px;top:484.0px;font-size:24.5px;line-height:34px;color:#9c9c9c;letter-spacing:-0.27px;">ПДВ</span>
<span class="t" style="left:2760.0px;top:418.5px;font-size:29px;line-height:41px;color:#1f1f1f;font-weight:700;letter-spacing:0.05px;">Кіл-</span>
<span class="t" style="left:2785.5px;top:462.5px;font-size:29px;line-height:41px;color:#1f1f1f;font-weight:700;letter-spacing:-3.53px;">ть</span>
<span class="t" style="left:2866.0px;top:440.5px;font-size:29px;line-height:41px;color:#1f1f1f;font-weight:700;letter-spacing:-1.15px;">Од.</span>
<span class="t" style="left:2970.0px;top:403.5px;font-size:29px;line-height:41px;color:#1f1f1f;font-weight:700;letter-spacing:-0.30px;">Сума</span>
<span class="t" style="left:3003.0px;top:446.0px;font-size:25.5px;line-height:36px;color:#9c9c9c;letter-spacing:0.18px;">без</span>
<span class="t" style="left:2993.0px;top:484.0px;font-size:24.5px;line-height:34px;color:#9c9c9c;letter-spacing:-0.27px;">ПДВ</span>
<span class="t" style="left:3081.0px;top:430.5px;font-size:29px;line-height:41px;color:#1f1f1f;font-weight:700;letter-spacing:0.50px;">ПД</span>
<div class="cb" style="left:337px;top:584px"></div>
<div class="btn" style="left:418.5px;top:568px;width:63px;height:63px"></div>
<svg class="ic" viewBox="0 0 30 30" style="left:435px;top:584px;width:30px;height:30px;color:#1f1f1f;stroke-width:2.7;"><path d="M1 3.7 H29 M1 15 H29 M1 26.3 H29"/></svg>
<div class="btn" style="left:548.5px;top:568px;width:62.5px;height:63px"></div>
<svg class="ic" viewBox="0 0 32 32" style="left:563px;top:582px;width:34px;height:34px;color:#1f1f1f;"><path d="M17.94 10.59 L17.65 9.70 L17.50 8.77 L17.49 7.83 L17.62 6.90 L17.88 6.00 L18.28 5.15 L18.80 4.36 L19.43 3.67 L20.15 3.07 L20.96 2.59 L21.83 2.23 L22.74 2.01 L23.68 1.92 L24.61 1.98 L22.30 5.83 L21.97 6.75 L22.01 7.73 L22.43 8.61 L23.15 9.27 L24.07 9.59 L25.04 9.55 L25.93 9.13 L26.58 8.41 L28.90 4.55 L29.48 5.55 L29.88 6.64 L30.06 7.79 L30.04 8.94 L29.80 10.08 L29.36 11.15 L28.73 12.12 L27.93 12.96 L26.99 13.64 L25.94 14.14 L24.82 14.43 L23.67 14.52 L22.52 14.39 L21.41 14.06 L14.06 21.41 L14.35 22.30 L14.50 23.23 L14.51 24.17 L14.38 25.10 L14.12 26.00 L13.72 26.85 L13.20 27.64 L12.57 28.33 L11.85 28.93 L11.04 29.41 L10.17 29.77 L9.26 29.99 L8.32 30.08 L7.39 30.02 L9.70 26.17 L10.03 25.25 L9.99 24.27 L9.57 23.39 L8.85 22.73 L7.93 22.41 L6.96 22.45 L6.07 22.87 L5.42 23.59 L3.10 27.45 L2.52 26.45 L2.12 25.36 L1.94 24.21 L1.96 23.06 L2.20 21.92 L2.64 20.85 L3.27 19.88 L4.07 19.04 L5.01 18.36 L6.06 17.86 L7.18 17.57 L8.33 17.48 L9.48 17.61 L10.59 17.94 Z" stroke-width="1.7" stroke-linejoin="round"/></svg>
<div class="btn" style="left:612.5px;top:568px;width:63px;height:63px"></div>
<svg class="ic" viewBox="0 0 32 32" style="left:627px;top:582px;width:34px;height:34px;color:#1f1f1f;"><path d="M3.11 20.62 L24.38 0.18 L27.92 -0.17 L32.63 4.73 L32.14 8.26 L10.87 28.70" stroke-width="1.7" stroke-linejoin="round"/><path d="M3.11 20.62 L1.43 30.00 L10.87 28.70" stroke-width="1.7" stroke-linejoin="round"/><path d="M3.11 20.62 L6.68 22.18 L7.48 24.88 L10.29 25.65 L10.87 28.70" stroke-width="1.5"/><path d="M6.88 23.10 L23.46 7.17" stroke-width="1.5"/><path d="M20.41 3.99 L28.17 12.07" stroke-width="1.5"/><path d="M1.43 30.00 L2.31 25.27 L6.19 29.31 Z" fill="currentColor" stroke-width="1"/></svg>
<span class="t" style="left:742.0px;top:560.0px;font-size:30px;line-height:42px;color:#1f1f1f;letter-spacing:-0.13px;">Діагностика</span>
<span class="t" style="left:742.0px;top:603.0px;font-size:27.5px;line-height:38px;color:#0b1a30;letter-spacing:-1.62px;"><u>1101-1050100</u></span>
<span class="t" style="left:1018.0px;top:579.0px;font-size:30px;line-height:42px;color:#1f1f1f;letter-spacing:-0.31px;">Діагностика ходової частини</span>
<div class="btn" style="left:2047px;top:568px;width:80px;height:63px"></div>
<svg class="ic" viewBox="0 0 30 30" style="left:2072px;top:584px;width:30px;height:30px;color:#1f1f1f;"><circle cx="15" cy="15" r="12.6" stroke-width="2.5"/><path d="M15 8 V16 L20.3 19.8" stroke-width="2.3"/></svg>
<span class="t" style="left:2272.0px;top:579.0px;font-size:30px;line-height:42px;color:#1f1f1f;letter-spacing:-2.36px;">0%</span>
<span class="t" style="left:2556.0px;top:579.0px;font-size:22px;line-height:40px;color:#1f1f1f;">—</span>
<span class="t" style="left:2618.0px;top:579.0px;font-size:30px;line-height:42px;color:#1f1f1f;letter-spacing:-0.35px;">650.00</span>
<span class="t" style="left:2762.0px;top:579.0px;font-size:30px;line-height:42px;color:#1f1f1f;letter-spacing:-2.13px;">1.00</span>
<span class="t" style="left:2856.0px;top:579.0px;font-size:30px;line-height:42px;color:#1f1f1f;letter-spacing:-0.54px;">змін</span>
<span class="t" style="left:2953.0px;top:579.0px;font-size:30px;line-height:42px;color:#1f1f1f;letter-spacing:-0.35px;">650.00</span>
<svg class="ic" viewBox="0 0 48 48" style="left:3077.5px;top:576px;width:48px;height:48px;color:#1f1f1f;stroke-width:3.9;"><circle cx="24" cy="24" r="21.8"/><path d="M16.5 19 A7.5 7.5 0 1 1 27.5 25 Q24 27.2 24 31"/><circle cx="24" cy="36" r="2.4" fill="currentColor" stroke="none"/></svg>
<svg class="ic" viewBox="0 0 30 30" style="left:3161px;top:587px;width:26px;height:26px;color:#1f1f1f;stroke-width:2.5;"><path d="M1 3.7 H29 M1 15 H29 M1 26.3 H29"/></svg>
<div class="cb" style="left:337px;top:703px"></div>
<div class="btn" style="left:418.5px;top:687px;width:63px;height:63px"></div>
<svg class="ic" viewBox="0 0 30 30" style="left:435px;top:703px;width:30px;height:30px;color:#1f1f1f;stroke-width:2.7;"><path d="M1 3.7 H29 M1 15 H29 M1 26.3 H29"/></svg>
<div class="btn" style="left:548.5px;top:687px;width:62.5px;height:63px"></div>
<svg class="ic" viewBox="0 0 32 32" style="left:563px;top:701px;width:34px;height:34px;color:#1f1f1f;"><path d="M17.94 10.59 L17.65 9.70 L17.50 8.77 L17.49 7.83 L17.62 6.90 L17.88 6.00 L18.28 5.15 L18.80 4.36 L19.43 3.67 L20.15 3.07 L20.96 2.59 L21.83 2.23 L22.74 2.01 L23.68 1.92 L24.61 1.98 L22.30 5.83 L21.97 6.75 L22.01 7.73 L22.43 8.61 L23.15 9.27 L24.07 9.59 L25.04 9.55 L25.93 9.13 L26.58 8.41 L28.90 4.55 L29.48 5.55 L29.88 6.64 L30.06 7.79 L30.04 8.94 L29.80 10.08 L29.36 11.15 L28.73 12.12 L27.93 12.96 L26.99 13.64 L25.94 14.14 L24.82 14.43 L23.67 14.52 L22.52 14.39 L21.41 14.06 L14.06 21.41 L14.35 22.30 L14.50 23.23 L14.51 24.17 L14.38 25.10 L14.12 26.00 L13.72 26.85 L13.20 27.64 L12.57 28.33 L11.85 28.93 L11.04 29.41 L10.17 29.77 L9.26 29.99 L8.32 30.08 L7.39 30.02 L9.70 26.17 L10.03 25.25 L9.99 24.27 L9.57 23.39 L8.85 22.73 L7.93 22.41 L6.96 22.45 L6.07 22.87 L5.42 23.59 L3.10 27.45 L2.52 26.45 L2.12 25.36 L1.94 24.21 L1.96 23.06 L2.20 21.92 L2.64 20.85 L3.27 19.88 L4.07 19.04 L5.01 18.36 L6.06 17.86 L7.18 17.57 L8.33 17.48 L9.48 17.61 L10.59 17.94 Z" stroke-width="1.7" stroke-linejoin="round"/></svg>
<div class="btn" style="left:612.5px;top:687px;width:63px;height:63px"></div>
<svg class="ic" viewBox="0 0 32 32" style="left:627px;top:701px;width:34px;height:34px;color:#1f1f1f;"><path d="M3.11 20.62 L24.38 0.18 L27.92 -0.17 L32.63 4.73 L32.14 8.26 L10.87 28.70" stroke-width="1.7" stroke-linejoin="round"/><path d="M3.11 20.62 L1.43 30.00 L10.87 28.70" stroke-width="1.7" stroke-linejoin="round"/><path d="M3.11 20.62 L6.68 22.18 L7.48 24.88 L10.29 25.65 L10.87 28.70" stroke-width="1.5"/><path d="M6.88 23.10 L23.46 7.17" stroke-width="1.5"/><path d="M20.41 3.99 L28.17 12.07" stroke-width="1.5"/><path d="M1.43 30.00 L2.31 25.27 L6.19 29.31 Z" fill="currentColor" stroke-width="1"/></svg>
<span class="t" style="left:742.0px;top:679.0px;font-size:30px;line-height:42px;color:#1f1f1f;letter-spacing:-0.13px;">Діагностика</span>
<span class="t" style="left:742.0px;top:722.0px;font-size:27.5px;line-height:38px;color:#0b1a30;letter-spacing:-1.44px;"><u>1101-1100000</u></span>
<span class="t" style="left:1018.0px;top:676.0px;font-size:30px;line-height:42px;color:#1f1f1f;letter-spacing:-0.35px;">Система охолодження - перевірка</span>
<span class="t" style="left:1018.0px;top:720.0px;font-size:30px;line-height:42px;color:#1f1f1f;letter-spacing:0.02px;">герметичності</span>
<div class="btn" style="left:2047px;top:687px;width:80px;height:63px"></div>
<svg class="ic" viewBox="0 0 30 30" style="left:2072px;top:703px;width:30px;height:30px;color:#1f1f1f;"><circle cx="15" cy="15" r="12.6" stroke-width="2.5"/><path d="M15 8 V16 L20.3 19.8" stroke-width="2.3"/></svg>
<span class="t" style="left:2272.0px;top:698.0px;font-size:30px;line-height:42px;color:#1f1f1f;letter-spacing:-2.36px;">0%</span>
<span class="t" style="left:2556.0px;top:698.0px;font-size:22px;line-height:40px;color:#1f1f1f;">—</span>
<span class="t" style="left:2618.0px;top:698.0px;font-size:30px;line-height:42px;color:#1f1f1f;letter-spacing:-0.35px;">650.00</span>
<span class="t" style="left:2762.0px;top:698.0px;font-size:30px;line-height:42px;color:#1f1f1f;letter-spacing:-2.13px;">1.00</span>
<span class="t" style="left:2879.0px;top:698.0px;font-size:30px;line-height:42px;color:#1f1f1f;letter-spacing:-4.81px;">шт</span>
<span class="t" style="left:2953.0px;top:698.0px;font-size:30px;line-height:42px;color:#1f1f1f;letter-spacing:-0.35px;">650.00</span>
<svg class="ic" viewBox="0 0 48 48" style="left:3077.5px;top:695px;width:48px;height:48px;color:#1f1f1f;stroke-width:3.9;"><circle cx="24" cy="24" r="21.8"/><path d="M16.5 19 A7.5 7.5 0 1 1 27.5 25 Q24 27.2 24 31"/><circle cx="24" cy="36" r="2.4" fill="currentColor" stroke="none"/></svg>
<svg class="ic" viewBox="0 0 30 30" style="left:3161px;top:706px;width:26px;height:26px;color:#1f1f1f;stroke-width:2.5;"><path d="M1 3.7 H29 M1 15 H29 M1 26.3 H29"/></svg>
<div class="cb" style="left:337px;top:822px"></div>
<div class="btn" style="left:418.5px;top:806px;width:63px;height:63px"></div>
<svg class="ic" viewBox="0 0 30 30" style="left:435px;top:822px;width:30px;height:30px;color:#1f1f1f;stroke-width:2.7;"><path d="M1 3.7 H29 M1 15 H29 M1 26.3 H29"/></svg>
<div class="btn" style="left:548.5px;top:806px;width:62.5px;height:63px"></div>
<svg class="ic" viewBox="0 0 32 32" style="left:563px;top:820px;width:34px;height:34px;color:#1f1f1f;"><path d="M17.94 10.59 L17.65 9.70 L17.50 8.77 L17.49 7.83 L17.62 6.90 L17.88 6.00 L18.28 5.15 L18.80 4.36 L19.43 3.67 L20.15 3.07 L20.96 2.59 L21.83 2.23 L22.74 2.01 L23.68 1.92 L24.61 1.98 L22.30 5.83 L21.97 6.75 L22.01 7.73 L22.43 8.61 L23.15 9.27 L24.07 9.59 L25.04 9.55 L25.93 9.13 L26.58 8.41 L28.90 4.55 L29.48 5.55 L29.88 6.64 L30.06 7.79 L30.04 8.94 L29.80 10.08 L29.36 11.15 L28.73 12.12 L27.93 12.96 L26.99 13.64 L25.94 14.14 L24.82 14.43 L23.67 14.52 L22.52 14.39 L21.41 14.06 L14.06 21.41 L14.35 22.30 L14.50 23.23 L14.51 24.17 L14.38 25.10 L14.12 26.00 L13.72 26.85 L13.20 27.64 L12.57 28.33 L11.85 28.93 L11.04 29.41 L10.17 29.77 L9.26 29.99 L8.32 30.08 L7.39 30.02 L9.70 26.17 L10.03 25.25 L9.99 24.27 L9.57 23.39 L8.85 22.73 L7.93 22.41 L6.96 22.45 L6.07 22.87 L5.42 23.59 L3.10 27.45 L2.52 26.45 L2.12 25.36 L1.94 24.21 L1.96 23.06 L2.20 21.92 L2.64 20.85 L3.27 19.88 L4.07 19.04 L5.01 18.36 L6.06 17.86 L7.18 17.57 L8.33 17.48 L9.48 17.61 L10.59 17.94 Z" stroke-width="1.7" stroke-linejoin="round"/></svg>
<div class="btn" style="left:612.5px;top:806px;width:63px;height:63px"></div>
<svg class="ic" viewBox="0 0 32 32" style="left:627px;top:820px;width:34px;height:34px;color:#1f1f1f;"><path d="M3.11 20.62 L24.38 0.18 L27.92 -0.17 L32.63 4.73 L32.14 8.26 L10.87 28.70" stroke-width="1.7" stroke-linejoin="round"/><path d="M3.11 20.62 L1.43 30.00 L10.87 28.70" stroke-width="1.7" stroke-linejoin="round"/><path d="M3.11 20.62 L6.68 22.18 L7.48 24.88 L10.29 25.65 L10.87 28.70" stroke-width="1.5"/><path d="M6.88 23.10 L23.46 7.17" stroke-width="1.5"/><path d="M20.41 3.99 L28.17 12.07" stroke-width="1.5"/><path d="M1.43 30.00 L2.31 25.27 L6.19 29.31 Z" fill="currentColor" stroke-width="1"/></svg>
<span class="t" style="left:742.0px;top:798.0px;font-size:30px;line-height:42px;color:#1f1f1f;letter-spacing:-0.13px;">Діагностика</span>
<span class="t" style="left:742.0px;top:841.0px;font-size:27.5px;line-height:38px;color:#0b1a30;letter-spacing:-1.44px;"><u>1101-1140000</u></span>
<span class="t" style="left:1018.0px;top:817.0px;font-size:30px;line-height:42px;color:#1f1f1f;letter-spacing:-0.09px;">Двигун - пошук несправностей</span>
<div class="btn" style="left:2047px;top:806px;width:80px;height:63px"></div>
<svg class="ic" viewBox="0 0 30 30" style="left:2072px;top:822px;width:30px;height:30px;color:#1f1f1f;"><circle cx="15" cy="15" r="12.6" stroke-width="2.5"/><path d="M15 8 V16 L20.3 19.8" stroke-width="2.3"/></svg>
<span class="t" style="left:2272.0px;top:817.0px;font-size:30px;line-height:42px;color:#1f1f1f;letter-spacing:-2.36px;">0%</span>
<span class="t" style="left:2556.0px;top:817.0px;font-size:22px;line-height:40px;color:#1f1f1f;">—</span>
<span class="t" style="left:2618.0px;top:817.0px;font-size:30px;line-height:42px;color:#1f1f1f;letter-spacing:-0.35px;">650.00</span>
<span class="t" style="left:2762.0px;top:817.0px;font-size:30px;line-height:42px;color:#1f1f1f;letter-spacing:-2.13px;">1.00</span>
<span class="t" style="left:2851.0px;top:817.0px;font-size:30px;line-height:42px;color:#1f1f1f;letter-spacing:-1.48px;">посл</span>
<span class="t" style="left:2953.0px;top:817.0px;font-size:30px;line-height:42px;color:#1f1f1f;letter-spacing:-0.35px;">650.00</span>
<svg class="ic" viewBox="0 0 48 48" style="left:3077.5px;top:814px;width:48px;height:48px;color:#1f1f1f;stroke-width:3.9;"><circle cx="24" cy="24" r="21.8"/><path d="M16.5 19 A7.5 7.5 0 1 1 27.5 25 Q24 27.2 24 31"/><circle cx="24" cy="36" r="2.4" fill="currentColor" stroke="none"/></svg>
<svg class="ic" viewBox="0 0 30 30" style="left:3161px;top:825px;width:26px;height:26px;color:#1f1f1f;stroke-width:2.5;"><path d="M1 3.7 H29 M1 15 H29 M1 26.3 H29"/></svg>
<div class="cb" style="left:337px;top:938px"></div>
<div class="btn" style="left:418.5px;top:922px;width:63px;height:63px"></div>
<svg class="ic" viewBox="0 0 30 30" style="left:435px;top:938px;width:30px;height:30px;color:#1f1f1f;stroke-width:2.7;"><path d="M1 3.7 H29 M1 15 H29 M1 26.3 H29"/></svg>
<div class="btn" style="left:548.5px;top:922px;width:62.5px;height:63px"></div>
<svg class="ic" viewBox="0 0 32 32" style="left:563px;top:936px;width:34px;height:34px;color:#1f1f1f;"><path d="M17.94 10.59 L17.65 9.70 L17.50 8.77 L17.49 7.83 L17.62 6.90 L17.88 6.00 L18.28 5.15 L18.80 4.36 L19.43 3.67 L20.15 3.07 L20.96 2.59 L21.83 2.23 L22.74 2.01 L23.68 1.92 L24.61 1.98 L22.30 5.83 L21.97 6.75 L22.01 7.73 L22.43 8.61 L23.15 9.27 L24.07 9.59 L25.04 9.55 L25.93 9.13 L26.58 8.41 L28.90 4.55 L29.48 5.55 L29.88 6.64 L30.06 7.79 L30.04 8.94 L29.80 10.08 L29.36 11.15 L28.73 12.12 L27.93 12.96 L26.99 13.64 L25.94 14.14 L24.82 14.43 L23.67 14.52 L22.52 14.39 L21.41 14.06 L14.06 21.41 L14.35 22.30 L14.50 23.23 L14.51 24.17 L14.38 25.10 L14.12 26.00 L13.72 26.85 L13.20 27.64 L12.57 28.33 L11.85 28.93 L11.04 29.41 L10.17 29.77 L9.26 29.99 L8.32 30.08 L7.39 30.02 L9.70 26.17 L10.03 25.25 L9.99 24.27 L9.57 23.39 L8.85 22.73 L7.93 22.41 L6.96 22.45 L6.07 22.87 L5.42 23.59 L3.10 27.45 L2.52 26.45 L2.12 25.36 L1.94 24.21 L1.96 23.06 L2.20 21.92 L2.64 20.85 L3.27 19.88 L4.07 19.04 L5.01 18.36 L6.06 17.86 L7.18 17.57 L8.33 17.48 L9.48 17.61 L10.59 17.94 Z" stroke-width="1.7" stroke-linejoin="round"/></svg>
<div class="btn" style="left:612.5px;top:922px;width:63px;height:63px"></div>
<svg class="ic" viewBox="0 0 32 32" style="left:627px;top:936px;width:34px;height:34px;color:#1f1f1f;"><path d="M3.11 20.62 L24.38 0.18 L27.92 -0.17 L32.63 4.73 L32.14 8.26 L10.87 28.70" stroke-width="1.7" stroke-linejoin="round"/><path d="M3.11 20.62 L1.43 30.00 L10.87 28.70" stroke-width="1.7" stroke-linejoin="round"/><path d="M3.11 20.62 L6.68 22.18 L7.48 24.88 L10.29 25.65 L10.87 28.70" stroke-width="1.5"/><path d="M6.88 23.10 L23.46 7.17" stroke-width="1.5"/><path d="M20.41 3.99 L28.17 12.07" stroke-width="1.5"/><path d="M1.43 30.00 L2.31 25.27 L6.19 29.31 Z" fill="currentColor" stroke-width="1"/></svg>
<span class="t" style="left:742.0px;top:914.0px;font-size:30px;line-height:42px;color:#1f1f1f;letter-spacing:-0.13px;">Діагностика</span>
<span class="t" style="left:1018.0px;top:933.0px;font-size:30px;line-height:42px;color:#1f1f1f;letter-spacing:-0.09px;">Двигун - пошук несправностей</span>
<div style="position:absolute;left:1650px;top:564px;width:269px;height:72px;border-radius:17px;background:rgba(144,88,176,.13);"></div>
<div style="position:absolute;left:1654.5px;top:568.5px;width:259px;height:62.5px;background:#fff;border:2.5px solid #9058b0;border-radius:13px;"></div>
<div style="position:absolute;left:1678px;top:584px;width:2px;height:32px;background:#1f1f1f;"></div>
<span class="t" style="left:1681.0px;top:580.0px;font-size:28.5px;line-height:40px;color:#bfbfbf;letter-spacing:-0.43px;">Бригада</span>
<svg class="ic" viewBox="0 0 26 26" style="left:1869px;top:589px;width:22px;height:22px;color:#c4c4c4;"><circle cx="10.5" cy="10.5" r="8.5" stroke-width="2.8"/><path d="M16.5 16.5 L25 25" stroke-width="2.8"/></svg>
<svg class="ic" viewBox="0 0 36 36" style="left:1938px;top:581px;width:34px;height:34px;color:#1f1f1f;"><circle cx="21.8" cy="16.5" r="6.2" stroke-width="2.6"/><path d="M11.5 33 A10.4 10.4 0 0 1 32.2 33" stroke-width="2.6"/><path d="M13.2 15.5 A6 6 0 1 1 20.5 7.8" stroke-width="2.6"/><path d="M4.2 26.5 A10.5 10.5 0 0 1 10.5 17.2" stroke-width="2.6"/></svg>
<svg class="ic" viewBox="0 0 34 34" style="left:1939px;top:700px;width:34px;height:34px;color:#1f1f1f;"><rect x="2.3" y="6" width="29.4" height="22" stroke-width="2.6"/><circle cx="12" cy="15" r="2.5" stroke-width="2.1"/><path d="M7.3 23 A4.8 4.8 0 0 1 16.7 23" stroke-width="2.1"/><path d="M20.5 13.7 H26 M20.5 18.7 H28" stroke-width="2.3"/></svg>
<svg class="ic" viewBox="0 0 34 34" style="left:1939px;top:819px;width:34px;height:34px;color:#1f1f1f;"><rect x="2.3" y="6" width="29.4" height="22" stroke-width="2.6"/><circle cx="12" cy="15" r="2.5" stroke-width="2.1"/><path d="M7.3 23 A4.8 4.8 0 0 1 16.7 23" stroke-width="2.1"/><path d="M20.5 13.7 H26 M20.5 18.7 H28" stroke-width="2.3"/></svg>
<div style="position:absolute;left:1654px;top:806px;width:260px;height:63px;background:#fff;border:2px solid #d9d9d9;border-radius:12px;"></div>
<span class="t" style="left:1678.5px;top:818.0px;font-size:28.5px;line-height:40px;color:#1f1f1f;letter-spacing:-0.17px;">Гена Іванов</span>
<svg class="ic" viewBox="0 0 22 22" style="left:1868px;top:827px;width:22px;height:22px;color:#8c8c8c;"><path d="M1.5 5 L11 17 L20.5 5" stroke-width="2"/></svg>
<div style="position:absolute;left:1654px;top:922px;width:260px;height:63px;background:#fff;border:2px solid #d9d9d9;border-radius:12px;"></div>
<svg class="ic" viewBox="0 0 34 34" style="left:1939px;top:936px;width:34px;height:34px;color:#1f1f1f;"><rect x="2.3" y="6" width="29.4" height="22" stroke-width="2.6"/><circle cx="12" cy="15" r="2.5" stroke-width="2.1"/><path d="M7.3 23 A4.8 4.8 0 0 1 16.7 23" stroke-width="2.1"/><path d="M20.5 13.7 H26 M20.5 18.7 H28" stroke-width="2.3"/></svg>
<div class="btn" style="left:2047px;top:922px;width:80px;height:63px"></div>
<svg class="ic" viewBox="0 0 48 48" style="left:3077.5px;top:930px;width:48px;height:48px;color:#1f1f1f;stroke-width:3.9;"><circle cx="24" cy="24" r="21.8"/><path d="M16.5 19 A7.5 7.5 0 1 1 27.5 25 Q24 27.2 24 31"/><circle cx="24" cy="36" r="2.4" fill="currentColor" stroke="none"/></svg>
<div style="position:absolute;left:1655px;top:641px;width:259px;height:142px;background:#fff;border-radius:16px;box-shadow:0 12px 32px rgba(0,0,0,.12),0 6px 12px -8px rgba(0,0,0,.16),0 18px 56px 16px rgba(0,0,0,.06);"></div>
<div style="position:absolute;left:1662px;top:712px;width:244px;height:64px;background:#f5f5f5;border-radius:8px;"></div>
<span class="t" style="left:1686.0px;top:659.0px;font-size:30px;line-height:42px;color:#1f1f1f;letter-spacing:-0.10px;">Двигун</span>
<span class="t" style="left:1686.0px;top:723.0px;font-size:30px;line-height:42px;color:#1f1f1f;letter-spacing:-0.18px;">Діагностика</span>
</div>
<span class="t" style="left:1944.4px;top:1093.0px;font-size:40px;line-height:56px;color:#e855f4;font-weight:700;letter-spacing:-0.26px;word-spacing:3px;transform:skewX(-12deg);transform-origin:0 70%;">Статус «Скасована» - не відображається в н/з</span>
<svg class="abs" style="left:1500px;top:1100px;width:500px;height:440px;overflow:visible" viewBox="1500 1100 500 440"><path d="M1938.5 1148 L1590 1462.5" stroke="#e855f4" stroke-width="10.5" fill="none"/><path d="M1553.5 1494.5 L1574 1443.5 L1607.5 1480 Z" fill="#e855f4"/></svg>
<div style="position:absolute;left:230px;top:1741px;width:2900px;height:59px;background:#3a3a3a;border-radius:24px 24px 0 0;box-shadow:0 -4px 46px 10px rgba(0,0,0,.27);"></div>
</body></html>
